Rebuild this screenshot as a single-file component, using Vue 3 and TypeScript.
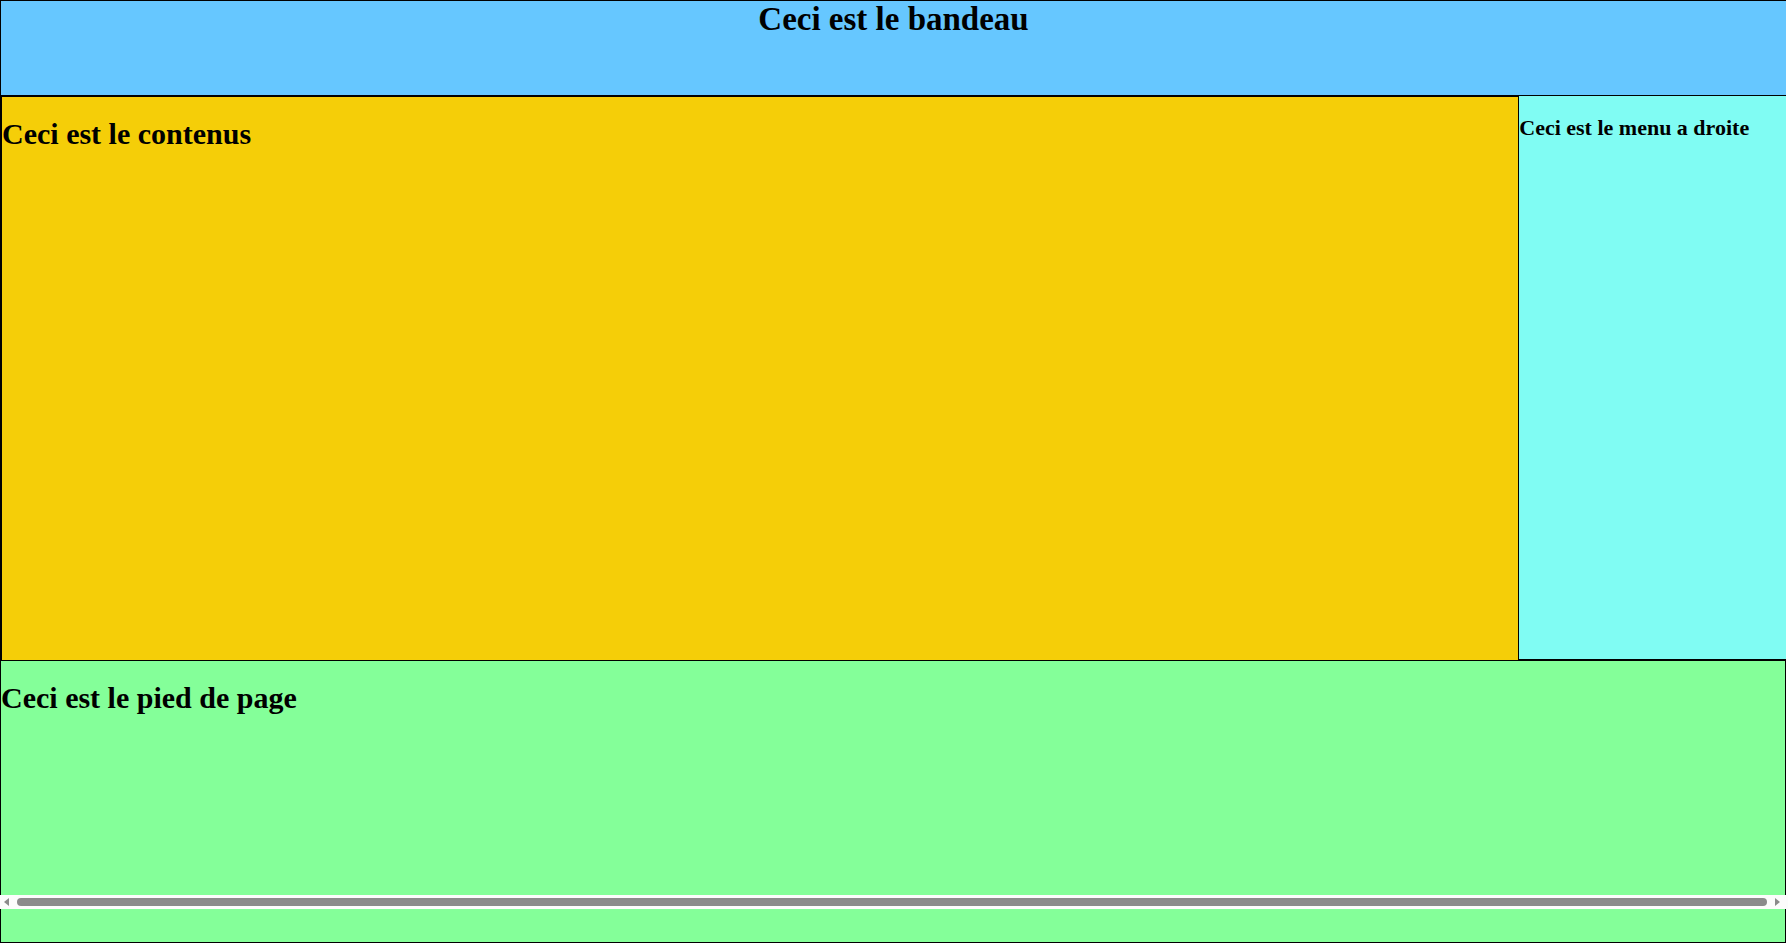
<script setup lang="ts">
const titles = {
  banner: 'Ceci est le bandeau',
  content: 'Ceci est le contenus',
  menu: 'Ceci est le menu a droite',
  footer: 'Ceci est le pied de page',
}
</script>

<template>
  <div class="page">
    <header class="banner">
      <h1>{{ titles.banner }}</h1>
    </header>
    <div class="middle">
      <main class="content">
        <h2>{{ titles.content }}</h2>
      </main>
      <aside class="menu">
        <h3>{{ titles.menu }}</h3>
      </aside>
    </div>
    <footer class="footer">
      <h2>{{ titles.footer }}</h2>
    </footer>
    <div class="scrollbar" aria-hidden="true">
      <svg width="5" height="8" viewBox="0 0 5 8"><path d="M5 0v8L0 4z" /></svg>
      <div class="thumb"></div>
      <svg width="5" height="8" viewBox="0 0 5 8"><path d="M0 0v8l5-4z" /></svg>
    </div>
  </div>
</template>

<style>
body {
  margin: 0;
  background: #fff;
}
</style>

<style scoped>
.page {
  position: relative;
  box-sizing: border-box;
  display: flex;
  flex-direction: column;
  min-height: 100vh;
  padding-right: 2px;
  font-family: "Liberation Serif", "Times New Roman", serif;
  color: #000;
}

h1,
h2,
h3 {
  margin: 0;
  font-weight: bold;
}

h1 {
  font-size: 33px;
  line-height: 36px;
}

h2 {
  font-size: 30px;
  line-height: 34px;
}

h3 {
  font-size: 22px;
  line-height: 26px;
}

.banner {
  box-sizing: border-box;
  min-height: 96px;
  border: 1px solid #000;
  border-width: 1px 0 1px 1px;
  background: #66c7ff;
  text-align: center;
}

.middle {
  display: flex;
  flex: 1;
  border-left: 1px solid #000;
}

.content {
  flex: 1;
  padding-top: 20px;
  border: 1px solid #000;
  border-width: 1px 0 0 1px;
  background: #f5ce08;
}

.menu {
  box-sizing: border-box;
  width: 15%;
  padding-top: 19px;
  border: 1px solid #000;
  border-width: 0 0 1px 1px;
  background: #80fcf3;
  white-space: nowrap;
}

.footer {
  box-sizing: border-box;
  min-height: 30vh;
  padding-top: 20px;
  border: 1px solid #000;
  background: #84ff99;
}

.scrollbar {
  position: absolute;
  right: 0;
  bottom: 34px;
  left: 0;
  box-sizing: border-box;
  display: flex;
  align-items: center;
  gap: 8px;
  height: 14px;
  padding: 0 8px 0 4px;
  background: #fcfcfc;
}

.scrollbar svg {
  flex: none;
  fill: #8b8b8b;
}

.thumb {
  flex: 1;
  height: 8px;
  border-radius: 4px;
  background: #8b8b8b;
}
</style>
